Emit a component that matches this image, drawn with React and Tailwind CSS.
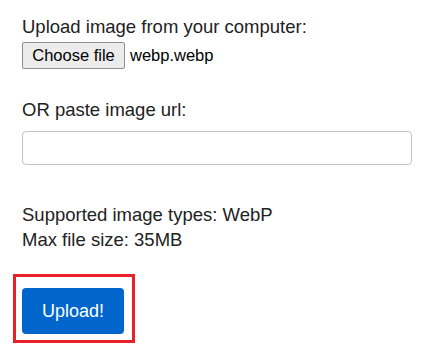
import React from 'react';

const App = () => {
  return (
    <div className="w-[422px] h-[350px] bg-white text-[#222] text-[18.5px] font-['Liberation_Sans',Arial,sans-serif] pl-[22px] pr-[10px] pt-[14px]">
      <div className="leading-[25px]">Upload image from your computer:</div>
      <div className="flex items-center gap-[5px] mt-[3px] text-[16.5px]">
        <button className="h-[27px] w-[103px] bg-[#ececec] border border-[#8f8f8f] rounded-[2px] text-black leading-none">
          Choose file
        </button>
        <span className="text-black">webp.webp</span>
      </div>

      <div className="leading-[25px] mt-[28px]">OR paste image url:</div>
      <input
        type="text"
        className="block mt-[9px] w-[390px] h-[34px] border border-[#c4c4c4] rounded-[4px] outline-none px-2"
      />

      <div className="mt-[37px] leading-[25px]">
        <div>Supported image types: WebP</div>
        <div>Max file size: 35MB</div>
      </div>

      <div className="mt-[22px] ml-[-9px] w-[122px] h-[69px] border-[3px] border-[#e8202a] pl-[6px] pt-[11px]">
        <button className="w-[102px] h-[46px] bg-[#0066cc] rounded-[4px] text-white text-[18px]">
          Upload!
        </button>
      </div>
    </div>
  );
};

export default App;
